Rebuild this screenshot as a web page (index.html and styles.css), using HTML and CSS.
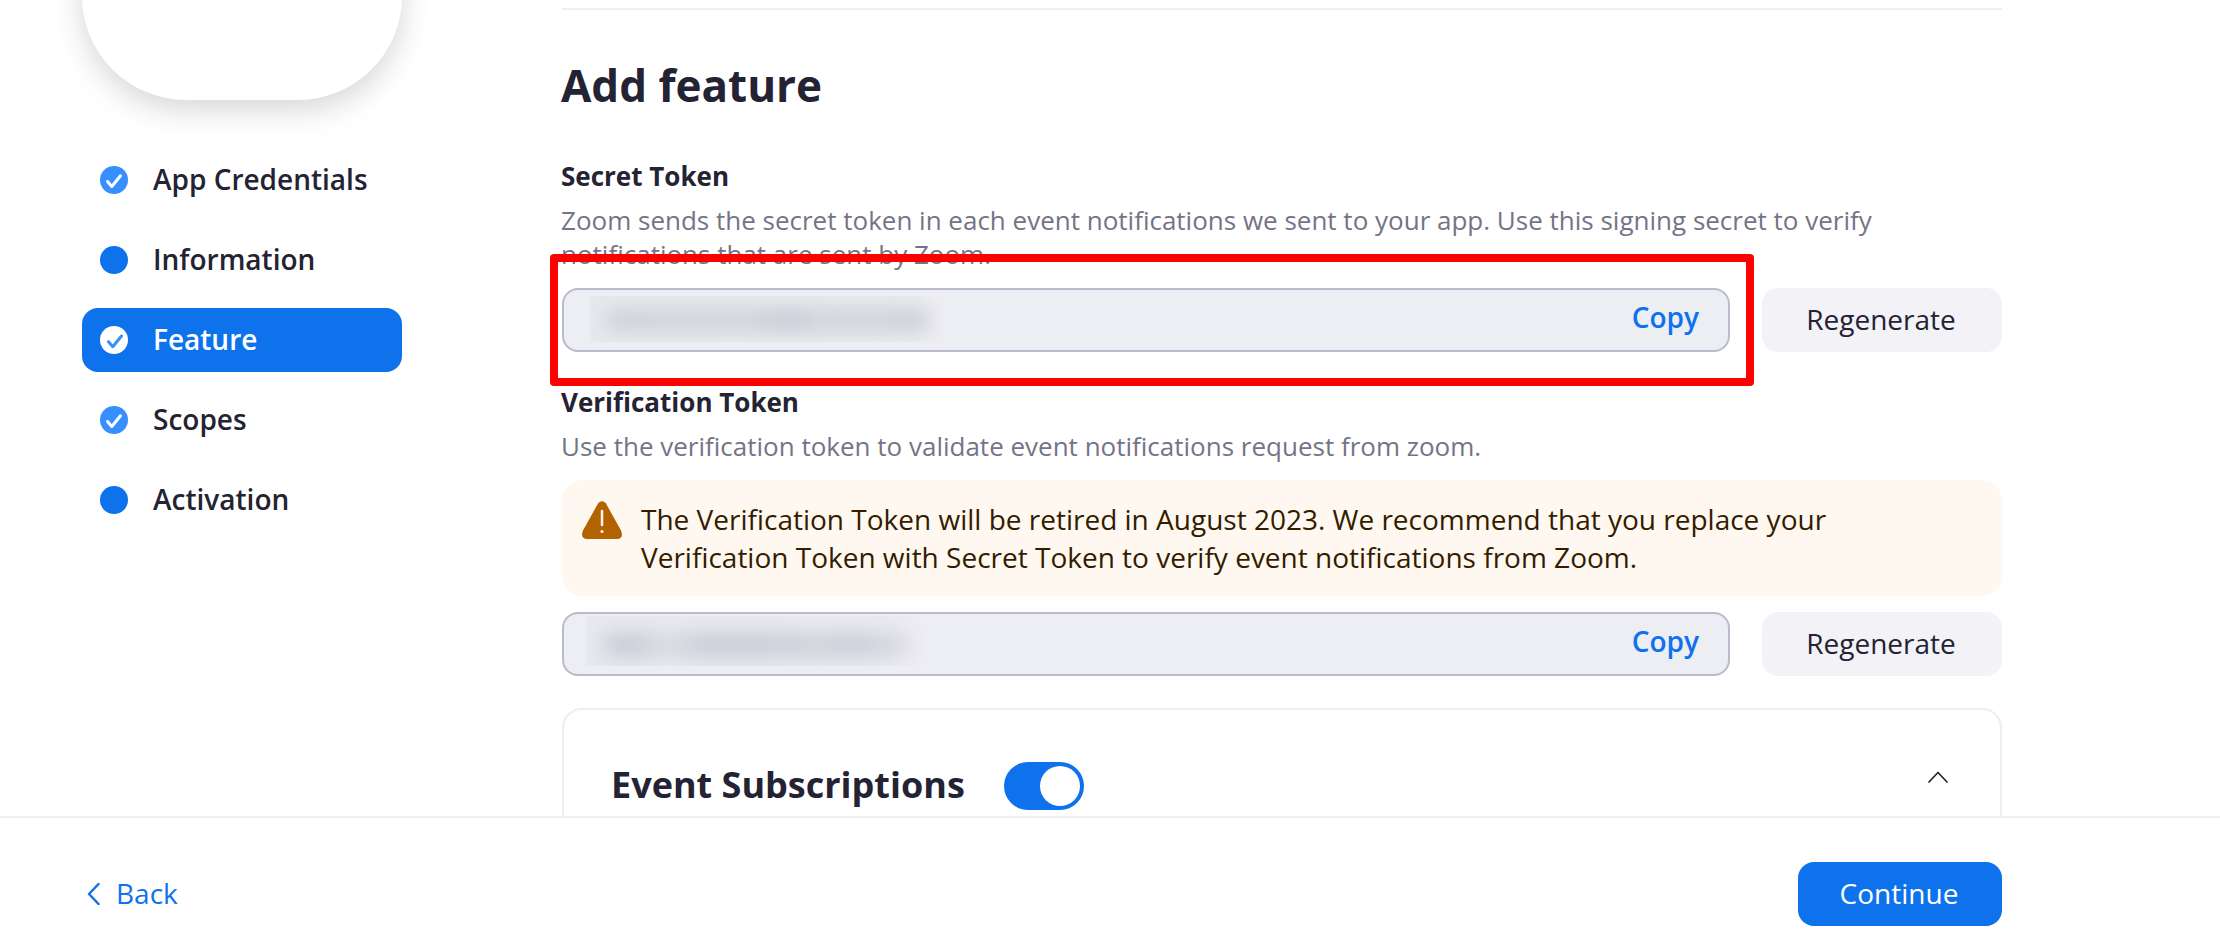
FILE: index.html
```
<!DOCTYPE html>
<html lang="en">
<head>
<meta charset="utf-8">
<title>Add feature</title>
<link rel="stylesheet" href="styles.css">
</head>
<body>
<div class="content">
  <aside class="sidebar">
    <div class="app-logo"></div>
    <nav class="steps">
      <a class="step"><svg class="dot" viewBox="0 0 28 28"><circle cx="14" cy="14" r="14" fill="#378fff"/><path d="M7.500 15.500l4.300 5L20.500 9.800" fill="none" stroke="#fff" stroke-width="3" stroke-linecap="round" stroke-linejoin="round"/></svg><span>App Credentials</span></a>
      <a class="step"><svg class="dot" viewBox="0 0 28 28"><circle cx="14" cy="14" r="14" fill="#0e72ed"/></svg><span>Information</span></a>
      <a class="step active"><svg class="dot" viewBox="0 0 28 28"><circle cx="14" cy="14" r="14" fill="#fff"/><path d="M8.500 15.700l4.300 5L21.500 10" fill="none" stroke="#378fff" stroke-width="3" stroke-linecap="round" stroke-linejoin="round"/></svg><span>Feature</span></a>
      <a class="step"><svg class="dot" viewBox="0 0 28 28"><circle cx="14" cy="14" r="14" fill="#378fff"/><path d="M7.500 15.500l4.300 5L20.500 9.800" fill="none" stroke="#fff" stroke-width="3" stroke-linecap="round" stroke-linejoin="round"/></svg><span>Scopes</span></a>
      <a class="step"><svg class="dot" viewBox="0 0 28 28"><circle cx="14" cy="14" r="14" fill="#0e72ed"/></svg><span>Activation</span></a>
    </nav>
  </aside>
  <main class="main">
    <h1 class="title">Add feature</h1>
    <section class="secret">
      <h2 class="label">Secret Token</h2>
      <p class="desc">Zoom sends the secret token in each event notifications we sent to your app. Use this signing secret to verify<br>notifications that are sent by Zoom.</p>
      <div class="token-row">
        <div class="field"><div class="mask mask-secret"><i class="smudge"></i></div><a class="copy">Copy</a></div>
        <button class="btn regenerate">Regenerate</button>
      </div>
      <div class="highlight"></div>
    </section>
    <section class="verification">
      <h2 class="label">Verification Token</h2>
      <p class="desc">Use the verification token to validate event notifications request from zoom.</p>
      <div class="alert">
        <svg class="warn" viewBox="0 0 40 38"><path d="M16 2.500Q20 -2 24 2.500L39 29.500Q42 37.500 35 38H5Q-2 37.500 1 29.500Z" fill="#b36200"/><path d="M20 10v14" stroke="#fff8f0" stroke-width="2.500" stroke-linecap="round"/><circle cx="20" cy="30.500" r="1.500" fill="#fff8f0"/></svg>
        <p class="alert-text">The Verification Token will be retired in August 2023. We recommend that you replace your<br>Verification Token with Secret Token to verify event notifications from Zoom.</p>
      </div>
      <div class="token-row">
        <div class="field"><div class="mask mask-verification"><i class="smudge"></i></div><a class="copy">Copy</a></div>
        <button class="btn regenerate">Regenerate</button>
      </div>
    </section>
    <section class="card">
      <h2 class="card-title">Event Subscriptions</h2>
      <span class="toggle"><span class="knob"></span></span>
      <svg class="chevron" viewBox="0 0 20 12"><path d="M1 11l9-9.500 9 9.500" fill="none" stroke="#232333" stroke-width="1.700" stroke-linecap="round" stroke-linejoin="round"/></svg>
    </section>
  </main>
</div>
<footer class="footer">
  <a class="back"><svg class="back-icon" viewBox="0 0 12 22"><path d="M11 1L1.500 11 11 21" fill="none" stroke="#0e72ed" stroke-width="2.500" stroke-linecap="round" stroke-linejoin="round"/></svg><span>Back</span></a>
  <button class="btn continue">Continue</button>
</footer>
</body>
</html>
```
FILE: styles.css
```
* { box-sizing: border-box; }
body {
  margin: 0;
  height: 950px;
  display: flex;
  flex-direction: column;
  overflow: hidden;
  background: #fff;
  color: #232333;
  font-family: "Open Sans", sans-serif;
  font-size: 28px;
}
h1, h2, p { margin: 0; }
.content {
  height: 816px;
  flex: none;
  display: flex;
  gap: 160px;
  padding-left: 82px;
  overflow: hidden;
}
.sidebar { width: 320px; flex: none; }
.app-logo {
  height: 320px;
  margin-top: -220px;
  border-radius: 104px;
  background: #fff;
  box-shadow: 0 10px 30px rgba(0, 0, 0, 0.16);
}
.steps {
  display: flex;
  flex-direction: column;
  gap: 16px;
  margin-top: 48px;
}
.step {
  height: 64px;
  display: flex;
  align-items: center;
  gap: 25px;
  padding-left: 18px;
  border-radius: 16px;
  font-weight: 600;
}
.step span { line-height: 38px; margin-top: -2px; }
.step.active { background: #0e72ed; color: #fff; }
.dot { width: 28px; height: 28px; flex: none; }
.main {
  width: 1440px;
  flex: none;
  margin-top: 8px;
  border-top: 2px solid #ededf4;
}
.title {
  margin: 45px 0 0 -1px;
  font-size: 44px;
  line-height: 60px;
  font-weight: 700;
}
.secret { position: relative; margin-top: 44px; }
.label {
  margin-left: -1px;
  font-size: 26px;
  line-height: 34px;
  font-weight: 700;
}
.desc {
  margin: 10px 0 0 -1px;
  font-size: 26px;
  line-height: 34px;
  color: #747487;
  white-space: nowrap;
}
.token-row { display: flex; gap: 32px; margin-top: 17px; }
.field {
  width: 1168px;
  height: 64px;
  display: flex;
  justify-content: space-between;
  border: 2px solid #babacc;
  border-radius: 16px;
  background: #ededf4;
}
.mask {
  overflow: hidden;
  background: linear-gradient(90deg, #e8e9ee, #e9eaef 85%, #ededf3);
}
.mask-secret { width: 354px; height: 46px; margin: 6px 0 0 26px; padding: 12px 14px 0; }
.mask-verification { width: 340px; height: 50px; margin: 2px 0 0 22px; padding: 17px 16px 0; }
.smudge {
  display: block;
  height: 24px;
  border-radius: 10px;
  filter: blur(9px);
}
.mask-secret .smudge { background: linear-gradient(90deg, #d2d2db, #d3d3dd 45%, #cacad5 57%, #d4d4de 68%, #d0d0da); }
.mask-verification .smudge { background: linear-gradient(90deg, #cfcfda, #cacad7 10%, #dbdbe2 21%, #cbcbd7 34%, #cdcdd9 60%, #d3d3db 70%, #cbcbd8 80%, #dbdbe2); }
.copy {
  margin: 8px 29px 0 0;
  line-height: 38px;
  font-weight: 600;
  color: #0e72ed;
}
.btn {
  height: 64px;
  padding: 0 2px 0 0;
  border: 0;
  border-radius: 16px;
  font: 400 28px/38px "Open Sans", sans-serif;
}
.regenerate { width: 240px; padding-bottom: 2px; background: #f2f2f7; color: #232333; }
.highlight {
  position: absolute;
  left: -12px;
  top: 95px;
  width: 1204px;
  height: 132px;
  border: 8px solid #f00;
  border-radius: 4px;
}
.verification { margin-top: 33px; }
.alert {
  height: 116px;
  display: flex;
  gap: 19px;
  margin-top: 17px;
  padding: 20px;
  border-radius: 20px;
  background: #fff8f0;
  color: #331c00;
}
.warn { width: 40px; height: 38px; margin-top: 1px; flex: none; }
.alert-text { line-height: 38px; white-space: nowrap; }
.verification .token-row { margin-top: 16px; }
.card {
  height: 300px;
  display: flex;
  align-items: flex-start;
  margin-top: 32px;
  padding: 0 52px 0 47px;
  border: 2px solid #ededf4;
  border-radius: 20px;
}
.card-title {
  margin-top: 51px;
  font-size: 36px;
  line-height: 48px;
  font-weight: 700;
}
.toggle {
  width: 80px;
  height: 48px;
  margin: 52px auto 0 39px;
  padding: 4px;
  border-radius: 24px;
  background: #0e72ed;
}
.knob {
  display: block;
  width: 40px;
  height: 40px;
  margin-left: 32px;
  border-radius: 50%;
  background: #fff;
}
.chevron { width: 20px; height: 12px; margin-top: 61px; }
.footer {
  height: 134px;
  display: flex;
  align-items: flex-start;
  justify-content: space-between;
  padding: 44px 218px 0 87px;
  border-top: 2px solid #ededf4;
}
.back {
  height: 64px;
  display: flex;
  align-items: center;
  gap: 16px;
  line-height: 38px;
  color: #0e72ed;
}
.back span { margin-top: -2px; }
.back-icon { width: 13px; height: 22px; }
.continue { width: 204px; padding-bottom: 2px; background: #0e72ed; color: #fff; }
```
